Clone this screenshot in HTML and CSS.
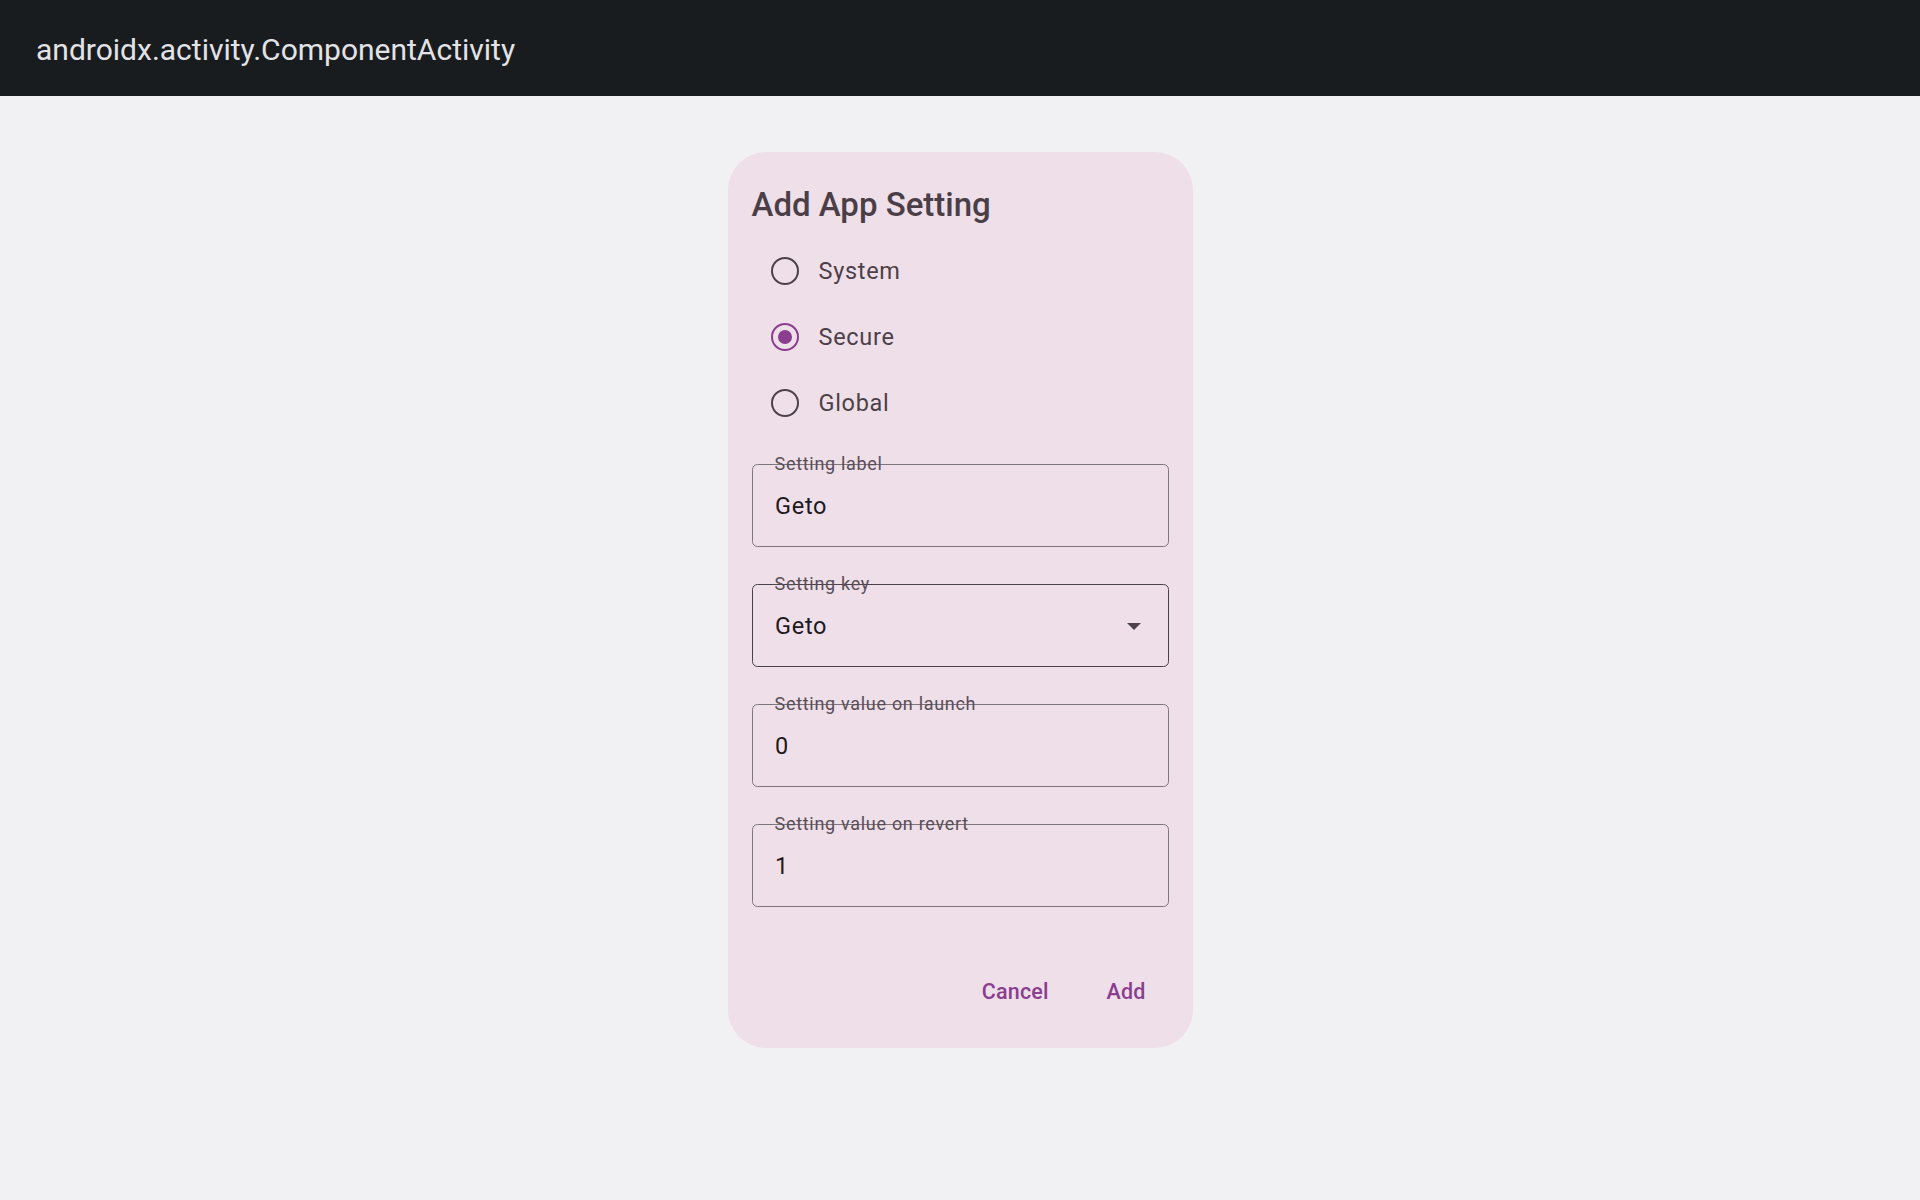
FILE: index.html
```html
<!DOCTYPE html>
<html lang="en">
<head>
<meta charset="utf-8">
<title>androidx.activity.ComponentActivity</title>
<link rel="stylesheet" href="styles.css">
</head>
<body>
<header class="appbar">
  <span class="appbar-title">androidx.activity.ComponentActivity</span>
</header>
<main class="screen">
  <section class="dialog">
    <h1 class="dialog-title">Add App Setting</h1>
    <div class="radio-group">
      <div class="radio-row">
        <span class="radio-touch"><span class="radio"></span></span>
        <span class="radio-label">System</span>
      </div>
      <div class="radio-row">
        <span class="radio-touch"><span class="radio radio-on"></span></span>
        <span class="radio-label">Secure</span>
      </div>
      <div class="radio-row">
        <span class="radio-touch"><span class="radio"></span></span>
        <span class="radio-label">Global</span>
      </div>
    </div>
    <div class="fields">
      <div class="field">
        <span class="field-label">Setting label</span>
        <span class="field-value">Geto</span>
      </div>
      <div class="field field-dark">
        <span class="field-label">Setting key</span>
        <span class="field-value">Geto</span>
        <span class="dropdown-arrow"></span>
      </div>
      <div class="field">
        <span class="field-label">Setting value on launch</span>
        <span class="field-value">0</span>
      </div>
      <div class="field">
        <span class="field-label">Setting value on revert</span>
        <span class="field-value">1</span>
      </div>
    </div>
    <div class="actions">
      <button class="text-btn">Cancel</button>
      <button class="text-btn">Add</button>
    </div>
  </section>
</main>
</body>
</html>
```

FILE: styles.css
```css
html, body {
  margin: 0;
  padding: 0;
}

body {
  width: 1920px;
  height: 1200px;
  background: #f1f0f3;
  font-family: Roboto, "Noto Sans", "Liberation Sans", sans-serif;
  overflow: hidden;
}

.appbar {
  height: 96px;
  box-sizing: border-box;
  background: #191c1f;
  display: flex;
  align-items: center;
  padding: 3px 0 0 36px;
}

.appbar-title {
  color: #e3e3e6;
  font-size: 30px;
  font-weight: 400;
}

.screen {
  display: flex;
  justify-content: center;
  padding-top: 56px;
}

.dialog {
  width: 465px;
  height: 896px;
  box-sizing: border-box;
  background: #eedfe8;
  border-radius: 38px;
  padding: 31px 24px 29px 24px;
  display: flex;
  flex-direction: column;
}

.dialog-title {
  margin: 0 0 11px 0;
  font-size: 33px;
  line-height: 44px;
  font-weight: 500;
  color: #4a3e47;
}

.radio-group {
  display: flex;
  flex-direction: column;
}

.radio-row {
  height: 66px;
  display: flex;
  align-items: center;
}

.radio-touch {
  width: 66px;
  height: 66px;
  display: flex;
  align-items: center;
  justify-content: center;
  flex: none;
}

.radio {
  width: 28px;
  height: 28px;
  box-sizing: border-box;
  border: 2.75px solid #4d424b;
  border-radius: 50%;
  display: flex;
  align-items: center;
  justify-content: center;
}

.radio-on {
  border-color: #8b3d8f;
}

.radio-on::after {
  content: "";
  width: 14px;
  height: 14px;
  border-radius: 50%;
  background: #8b3d8f;
}

.radio-label {
  margin-left: 1px;
  font-size: 23.5px;
  letter-spacing: 0.7px;
  color: #4d3f49;
}

.fields {
  display: flex;
  flex-direction: column;
  gap: 37px;
  margin-top: 28px;
}

.field {
  position: relative;
  height: 83px;
  box-sizing: border-box;
  border: 1.4px solid #7f757c;
  border-radius: 5.5px;
  display: flex;
  align-items: center;
  padding-left: 22.6px;
}

.field-dark {
  border-color: #4b4148;
}

.field-label {
  position: absolute;
  left: 22px;
  top: -12.5px;
  font-size: 18px;
  letter-spacing: 0.7px;
  color: #5a4e57;
}

.field-value {
  font-size: 23.5px;
  letter-spacing: 0.7px;
  color: #1e1a1d;
}

.dropdown-arrow {
  margin-left: auto;
  margin-right: 27px;
  width: 0;
  height: 0;
  border-left: 7px solid transparent;
  border-right: 7px solid transparent;
  border-top: 7px solid #4d424b;
  margin-top: 1px;
}

.actions {
  margin-top: 57px;
  display: flex;
  justify-content: flex-end;
  gap: 26px;
  padding-right: 7px;
}

.text-btn {
  height: 55px;
  padding: 0 16px;
  border: none;
  background: transparent;
  font-family: Roboto, "Noto Sans", "Liberation Sans", sans-serif;
  font-size: 21.5px;
  font-weight: 500;
  letter-spacing: 0.15px;
  color: #8b3d8f;
  display: flex;
  align-items: center;
}
```
